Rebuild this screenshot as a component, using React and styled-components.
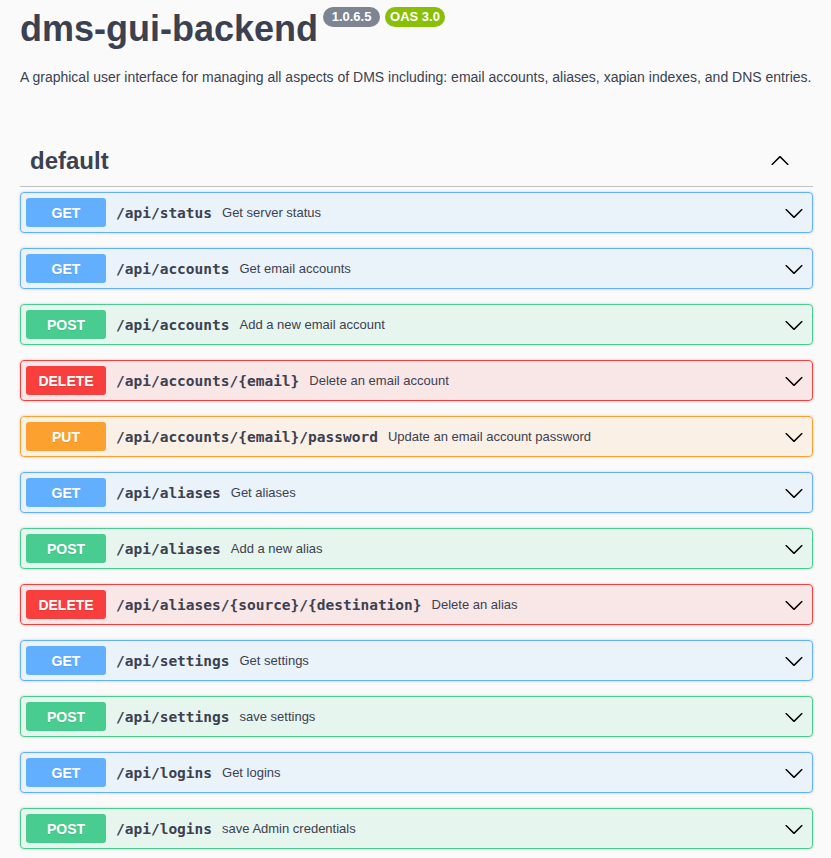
import React from "react";
import styled, { createGlobalStyle } from "styled-components";

const methodColors = {
  GET: "97, 175, 254",
  POST: "73, 204, 144",
  DELETE: "249, 62, 62",
  PUT: "252, 161, 48",
};

const operations = [
  { method: "GET", path: "/api/status", summary: "Get server status" },
  { method: "GET", path: "/api/accounts", summary: "Get email accounts" },
  { method: "POST", path: "/api/accounts", summary: "Add a new email account" },
  { method: "DELETE", path: "/api/accounts/{email}", summary: "Delete an email account" },
  { method: "PUT", path: "/api/accounts/{email}/password", summary: "Update an email account password" },
  { method: "GET", path: "/api/aliases", summary: "Get aliases" },
  { method: "POST", path: "/api/aliases", summary: "Add a new alias" },
  { method: "DELETE", path: "/api/aliases/{source}/{destination}", summary: "Delete an alias" },
  { method: "GET", path: "/api/settings", summary: "Get settings" },
  { method: "POST", path: "/api/settings", summary: "save settings" },
  { method: "GET", path: "/api/logins", summary: "Get logins" },
  { method: "POST", path: "/api/logins", summary: "save Admin credentials" },
];

const ARROW =
  "M17.418 6.109c.272-.268.709-.268.979 0s.271.701 0 .969l-7.908 7.83c-.27.268-.707.268-.979 0l-7.908-7.83c-.27-.268-.27-.701 0-.969.271-.268.709-.268.979 0L10 13.25l7.418-7.141z";

function Arrow({ up }) {
  return (
    <ArrowSvg width="20" height="20" viewBox="0 0 20 20" $up={up}>
      <path d={ARROW} fill="#000" />
    </ArrowSvg>
  );
}

export default function App() {
  return (
    <>
      <GlobalStyle />
      <Wrapper>
        <Info>
          <TitleRow>
            <Title>dms-gui-backend</Title>
            <Badge $bg="#7d8492">{" 1.0.6.5 "}</Badge>
            <Badge $bg="#89bf04">OAS 3.0</Badge>
          </TitleRow>
          <Description>
            A graphical user interface for managing all aspects of DMS including: email accounts,
            aliases, xapian indexes, and DNS entries.
          </Description>
        </Info>
        <TagHeader>
          <TagName>default</TagName>
          <ExpandButton>
            <Arrow up />
          </ExpandButton>
        </TagHeader>
        {operations.map((op, i) => (
          <OpBlock key={i} $rgb={methodColors[op.method]}>
            <Method $rgb={methodColors[op.method]}>{op.method}</Method>
            <Path>{op.path}</Path>
            <Summary>{op.summary}</Summary>
            <ExpandButton>
              <Arrow />
            </ExpandButton>
          </OpBlock>
        ))}
      </Wrapper>
    </>
  );
}

const GlobalStyle = createGlobalStyle`
  body {
    margin: 0;
    background: #fafafa;
    font-family: "Liberation Sans", Arial, sans-serif;
    color: #3b4151;
  }
`;

const Wrapper = styled.div`
  padding: 8px 18px 20px 20px;
`;

const Info = styled.div`
  margin: 0 0 52px;
`;

const TitleRow = styled.div`
  display: flex;
  align-items: flex-start;
`;

const Title = styled.h2`
  margin: 0;
  font-size: 36px;
  font-weight: 700;
  line-height: 41px;
  color: #3b4151;
`;

const Badge = styled.span`
  margin: -1px 0 0 5px;
  padding: 2px 5px;
  border-radius: 57px;
  background: ${(p) => p.$bg};
  color: #fff;
  font-size: 13px;
  font-weight: 700;
  line-height: 16px;
  white-space: pre;
`;

const Description = styled.p`
  margin: 20px 0 0;
  font-size: 14px;
  line-height: 16px;
`;

const TagHeader = styled.div`
  display: flex;
  align-items: center;
  justify-content: space-between;
  padding: 10px 20px 11px 10px;
  border-bottom: 1px solid rgba(59, 65, 81, 0.3);
  margin-bottom: 5px;
`;

const TagName = styled.h3`
  margin: 0;
  font-size: 24px;
  font-weight: 700;
  line-height: 28px;
`;

const ExpandButton = styled.span`
  display: flex;
  align-items: center;
  margin-right: 3px;
`;

const ArrowSvg = styled.svg`
  display: block;
  transform: ${(p) => (p.$up ? "rotate(180deg)" : "none")};
`;

const OpBlock = styled.div`
  display: flex;
  align-items: center;
  padding: 5px;
  margin-bottom: 15px;
  border: 1px solid rgb(${(p) => p.$rgb});
  border-radius: 4px;
  background: rgba(${(p) => p.$rgb}, 0.1);
  box-shadow: 0 0 3px rgba(0, 0, 0, 0.19);
`;

const Method = styled.span`
  min-width: 80px;
  height: 29px;
  display: flex;
  align-items: center;
  justify-content: center;
  border-radius: 3px;
  background: rgb(${(p) => p.$rgb});
  color: #fff;
  font-size: 14px;
  font-weight: 700;
  text-shadow: 0 1px 0 rgba(0, 0, 0, 0.1);
`;

const Path = styled.span`
  padding: 0 10px;
  font-family: "DejaVu Sans Mono", "Liberation Mono", monospace;
  font-size: 14.5px;
  font-weight: 700;
  color: #3b4151;
`;

const Summary = styled.span`
  flex: 1;
  font-size: 13px;
  color: #3b4151;
`;
